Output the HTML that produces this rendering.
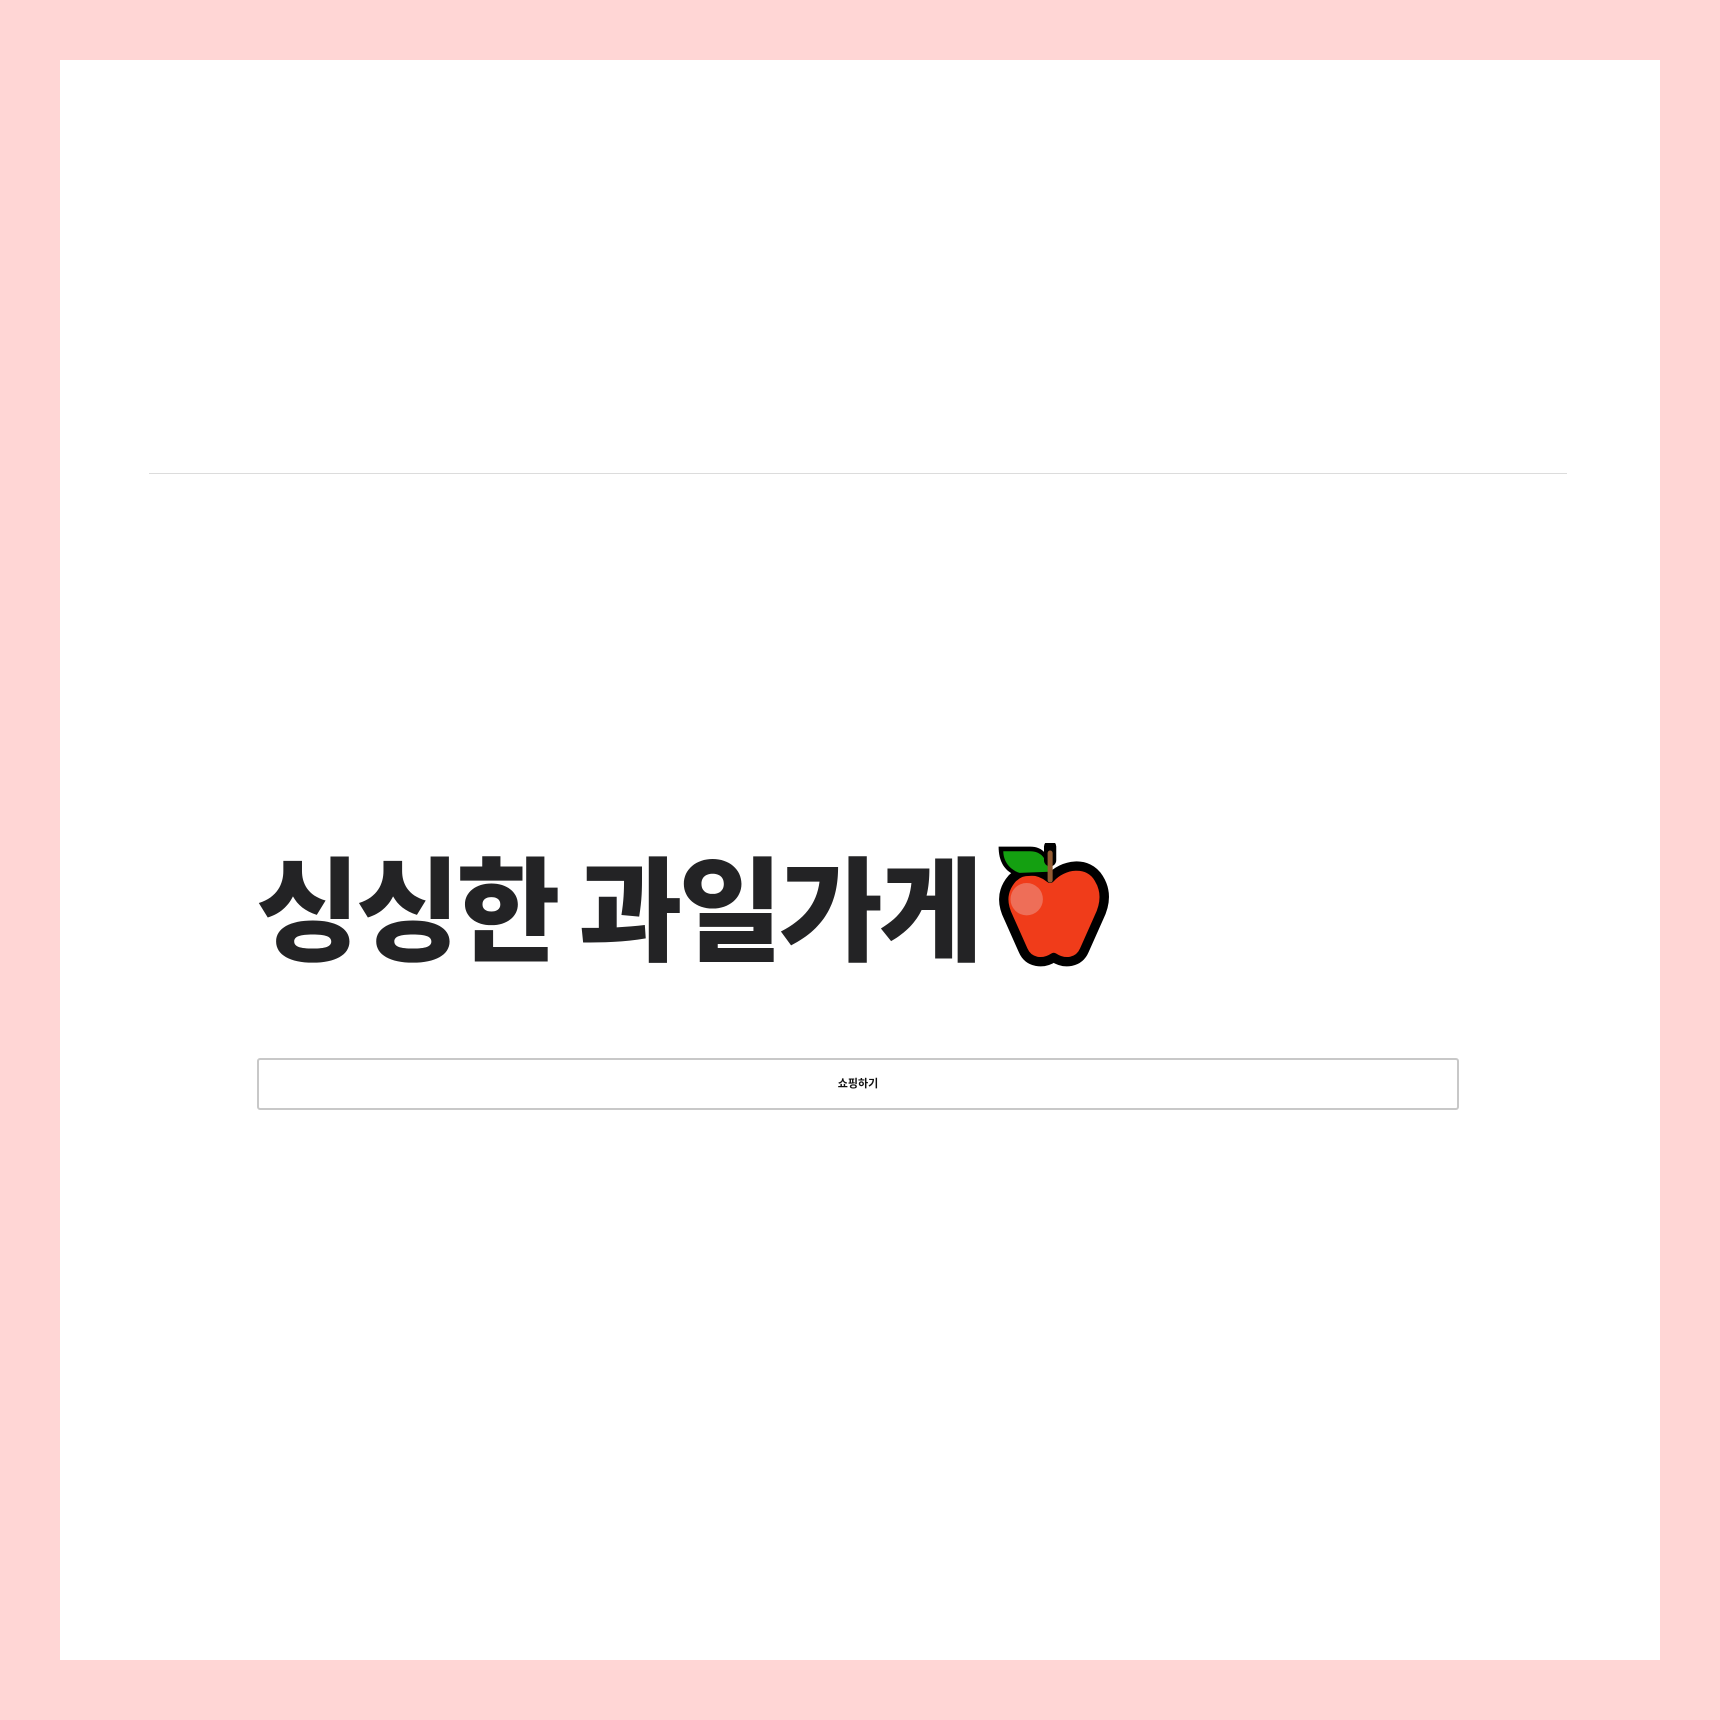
<!DOCTYPE html>
<html><head><meta charset="utf-8"><style>
html,body{margin:0;padding:0;}
body{width:1720px;height:1720px;background:#ffd6d5;position:relative;overflow:hidden;font-family:"Liberation Sans","Noto Sans CJK KR",sans-serif;}
.page{position:absolute;left:60px;top:60px;width:1600px;height:1600px;background:#fff;}
.line{position:absolute;left:149px;top:473px;width:1418px;height:1px;background:#dcdcdc;}
h1{position:absolute;left:256px;top:823px;margin:0;font-size:113px;line-height:160px;font-weight:900;color:#232325;white-space:nowrap;font-family:"Noto Sans CJK KR",sans-serif;letter-spacing:-3.8px;}
svg.apple{position:absolute;left:995px;top:843px;}
.btn{position:absolute;left:257px;top:1058px;width:1198px;height:48px;border:2px solid #c8c8c8;border-radius:3px;background:#fff;text-align:center;line-height:46px;font-size:11px;font-weight:700;color:#111;font-family:"Noto Sans CJK KR",sans-serif;}
</style></head><body>
<div class="page"></div>
<div class="line"></div>
<h1>싱싱한 과일가게</h1>
<svg class="apple" width="116" height="126" viewBox="62 52 322 350" preserveAspectRatio="none">
<path d="M215,150 C250,110 320,100 350,150 C375,190 365,230 350,260 L310,350 C295,385 255,390 225,370 C195,390 155,385 140,350 L100,260 C85,230 75,190 110,150 C140,120 185,125 215,150 Z" fill="#f03c1a" stroke="#000" stroke-width="26" stroke-linejoin="round"/>
<path d="M72,62 L160,62 C195,62 215,85 220,140 L130,145 C90,135 72,105 72,62 Z" fill="#000"/>
<path d="M85,75 L160,75 C190,75 205,95 212,132 L130,135 C100,125 85,100 85,75 Z" fill="#14a011"/>
<line x1="215" y1="62" x2="215" y2="100" stroke="#000" stroke-width="34" stroke-linecap="round"/>
<line x1="215" y1="80" x2="215" y2="155" stroke="#935b32" stroke-width="14" stroke-linecap="round"/>
<circle cx="150" cy="208" r="45" fill="#ee6e58"/>
</svg>
<div class="btn">쇼핑하기</div>
</body></html>
